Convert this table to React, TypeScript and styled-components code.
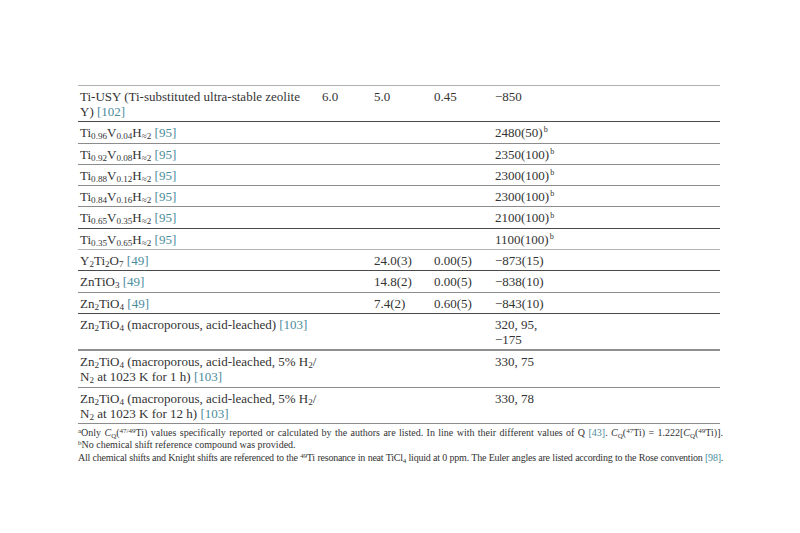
import React from "react"
import styled, { createGlobalStyle } from "styled-components"

const GlobalStyle = createGlobalStyle`
  html, body {
    margin: 0;
    padding: 0;
    background: #ffffff;
  }
  body {
    font-family: "Liberation Serif", "DejaVu Serif", serif;
    color: #333333;
  }
`

type Tone = "dark" | "mid" | "light" | "thick"

const lineColor: Record<Tone, string> = {
    dark: "#4a4a4a",
    mid: "#8c8c8c",
    light: "#b4b4b4",
    thick: "#8f8f8f",
}

const Page = styled.div`
    padding: 85px 0 0 78px;
    width: 642px;
`
const Table = styled.div`
    border-top: 1px solid #b0b0b0;
    font-size: 13px;
    line-height: 15px;
`
const TableRow = styled.div<{ $line: Tone }>`
    display: grid;
    grid-template-columns: 242px 52px 60px 61px 70px 1fr;
    border-bottom: ${(p) => (p.$line === "thick" ? "2px" : "1px")} solid ${(p) => lineColor[p.$line]};
`
const Cell = styled.div`
    padding: 3px 2px 2.3px;
    white-space: nowrap;
`
const RefText = styled.span`
    color: #4a8c9c;
`
const Sub = styled.sub`
    font-size: 0.7em;
    line-height: 0;
    vertical-align: -0.25em;
`
const Sup = styled.sup`
    font-size: 0.62em;
    line-height: 0;
    vertical-align: 0.6em;
    margin-left: 1px;
`
const Notes = styled.div`
    padding: 3px 0 0 0;
    width: 645px;
    font-size: 10px;
    line-height: 12.4px;
`
const Note = styled.div<{ $spread?: boolean; $tight?: boolean }>`
    white-space: nowrap;
    text-align: ${(p) => (p.$spread ? "justify" : "left")};
    text-align-last: ${(p) => (p.$spread ? "justify" : "auto")};
    letter-spacing: ${(p) => (p.$tight ? "-0.24px" : "0")};
    ${(p) => (p.$spread ? "white-space: normal;" : "")}
`
const NoteMark = styled.sup`
    font-size: 0.7em;
    line-height: 0;
    vertical-align: 0.5em;
`
const NoteSub = styled.sub`
    font-size: 0.7em;
    line-height: 0;
    vertical-align: -0.25em;
`
const NoteSup = styled.sup`
    font-size: 0.7em;
    line-height: 0;
    vertical-align: 0.5em;
`

type Row = {
    name: React.ReactNode
    c2?: string
    c3?: string
    c4?: string
    shift: React.ReactNode
    line: Tone
}

const Ref = ({ n }: { n: number }) => <RefText>[{n}]</RefText>

const tiv = (a: string, b: string) => (
    <>
        Ti<Sub>{a}</Sub>V<Sub>{b}</Sub>H<Sub>≈2</Sub> <Ref n={95} />
    </>
)

const knight = (v: string) => (
    <>
        {v}
        <Sup>b</Sup>
    </>
)

const rows: Row[] = [
    {
        name: (
            <>
                Ti-USY (Ti-substituted ultra-stable zeolite
                <br />Y) <Ref n={102} />
            </>
        ),
        c2: "6.0",
        c3: "5.0",
        c4: "0.45",
        shift: "−850",
        line: "dark",
    },
    { name: tiv("0.96", "0.04"), shift: knight("2480(50)"), line: "mid" },
    { name: tiv("0.92", "0.08"), shift: knight("2350(100)"), line: "mid" },
    { name: tiv("0.88", "0.12"), shift: knight("2300(100)"), line: "mid" },
    { name: tiv("0.84", "0.16"), shift: knight("2300(100)"), line: "mid" },
    { name: tiv("0.65", "0.35"), shift: knight("2100(100)"), line: "dark" },
    { name: tiv("0.35", "0.65"), shift: knight("1100(100)"), line: "light" },
    {
        name: (
            <>
                Y<Sub>2</Sub>Ti<Sub>2</Sub>O<Sub>7</Sub> <Ref n={49} />
            </>
        ),
        c3: "24.0(3)",
        c4: "0.00(5)",
        shift: "−873(15)",
        line: "dark",
    },
    {
        name: (
            <>
                ZnTiO<Sub>3</Sub> <Ref n={49} />
            </>
        ),
        c3: "14.8(2)",
        c4: "0.00(5)",
        shift: "−838(10)",
        line: "mid",
    },
    {
        name: (
            <>
                Zn<Sub>2</Sub>TiO<Sub>4</Sub> <Ref n={49} />
            </>
        ),
        c3: "7.4(2)",
        c4: "0.60(5)",
        shift: "−843(10)",
        line: "dark",
    },
    {
        name: (
            <>
                Zn<Sub>2</Sub>TiO<Sub>4</Sub> (macroporous, acid-leached) <Ref n={103} />
            </>
        ),
        shift: (
            <>
                320, 95,
                <br />−175
            </>
        ),
        line: "thick",
    },
    {
        name: (
            <>
                Zn<Sub>2</Sub>TiO<Sub>4</Sub> (macroporous, acid-leached, 5% H<Sub>2</Sub>/
                <br />N<Sub>2</Sub> at 1023 K for 1 h) <Ref n={103} />
            </>
        ),
        shift: "330, 75",
        line: "mid",
    },
    {
        name: (
            <>
                Zn<Sub>2</Sub>TiO<Sub>4</Sub> (macroporous, acid-leached, 5% H<Sub>2</Sub>/
                <br />N<Sub>2</Sub> at 1023 K for 12 h) <Ref n={103} />
            </>
        ),
        shift: "330, 78",
        line: "mid",
    },
]

export default function App() {
    return (
        <>
            <GlobalStyle />
            <Page>
                <Table>
                    {rows.map((r, i) => (
                        <TableRow key={i} $line={r.line}>
                            <Cell>{r.name}</Cell>
                            <Cell>{r.c2}</Cell>
                            <Cell>{r.c3}</Cell>
                            <Cell>{r.c4}</Cell>
                            <Cell>{r.shift}</Cell>
                            <Cell />
                        </TableRow>
                    ))}
                </Table>
                <Notes>
                    <Note $spread>
                        <NoteMark>a</NoteMark>Only <i>C</i>
                        <NoteSub>Q</NoteSub>(<NoteSup>47/49</NoteSup>Ti) values specifically reported or
                        calculated by the authors are listed. In line with their different values of Q{" "}
                        <RefText>[43]</RefText>. <i>C</i>
                        <NoteSub>Q</NoteSub>(<NoteSup>47</NoteSup>Ti) = 1.222[<i>C</i>
                        <NoteSub>Q</NoteSub>(<NoteSup>49</NoteSup>Ti)].
                    </Note>
                    <Note>
                        <NoteMark>b</NoteMark>No chemical shift reference compound was provided.
                    </Note>
                    <Note $spread $tight>
                        All chemical shifts and Knight shifts are referenced to the <NoteSup>49</NoteSup>Ti
                        resonance in neat TiCl<NoteSub>4</NoteSub> liquid at 0 ppm. The Euler angles are listed
                        according to the Rose convention <RefText>[98]</RefText>.
                    </Note>
                </Notes>
            </Page>
        </>
    )
}
